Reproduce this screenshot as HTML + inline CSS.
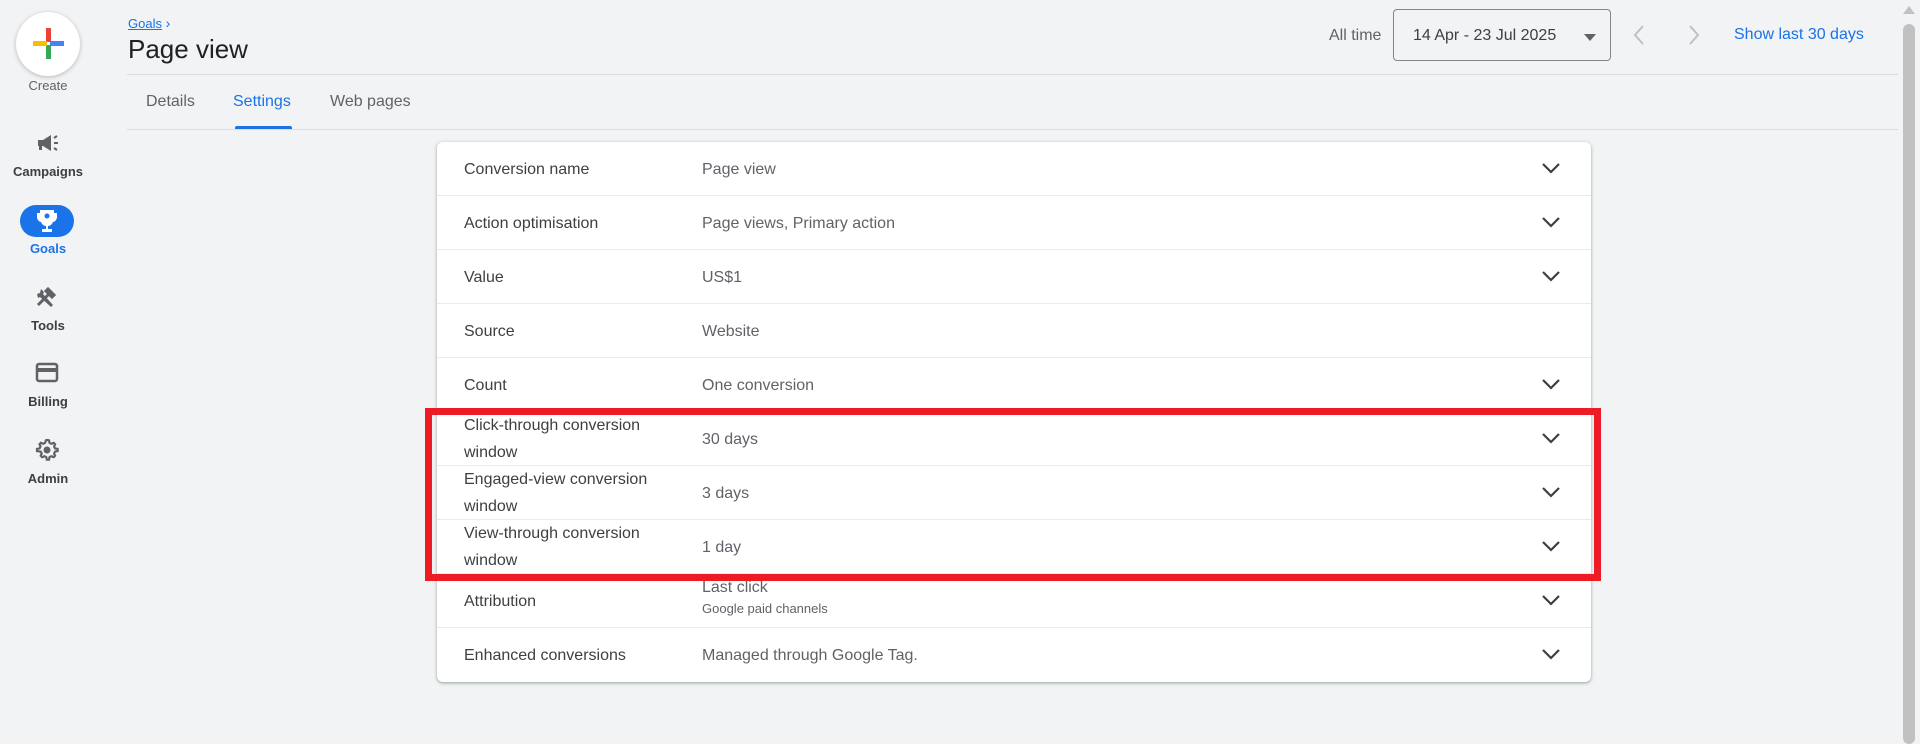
<!DOCTYPE html>
<html><head><meta charset="utf-8"><style>
*{margin:0;padding:0;box-sizing:border-box}
body{width:1920px;height:730px;background:#f1f3f4;font-family:"Liberation Sans",Arial,sans-serif;position:relative;overflow:hidden;color:#3c4043}
.abs{position:absolute}
.nav{position:absolute;left:0;width:96px;text-align:center;font-size:13px;color:#3c4043;font-weight:bold}
.card{position:absolute;left:437px;top:142px;width:1154px;background:#fff;border-radius:6px;box-shadow:0 1px 2px rgba(60,64,67,.3),0 1px 3px 1px rgba(60,64,67,.15)}
.row{height:54px;border-bottom:1px solid #e8eaed;position:relative;font-size:16px}
.row:last-child{border-bottom:none}
.lab{position:absolute;left:27px;top:0;height:54px;display:flex;align-items:center;width:230px;line-height:27px;color:#3c4043}
.val{position:absolute;left:265px;top:1px;height:54px;display:flex;flex-direction:column;justify-content:center;color:#5f6368}
.chev{position:absolute;right:30px;top:19px}
</style></head><body>
<div class="abs" style="left:16px;top:12px;width:64px;height:64px;border-radius:50%;background:#fff;box-shadow:0 1px 4px rgba(0,0,0,.25)">
<svg width="64" height="64" viewBox="0 0 64 64"><rect x="30" y="16" width="5" height="14" fill="#ea4335"/><rect x="34" y="29" width="14" height="5" fill="#4285f4"/><rect x="30" y="33" width="5" height="14" fill="#34a853"/><rect x="17" y="29" width="14" height="5" fill="#fbbc04"/></svg></div>
<div class="nav" style="top:78px;font-weight:normal;color:#5f6368">Create</div>
<svg class="abs" style="left:36px;top:134px" width="24" height="20" viewBox="0 0 24 20"><path d="M2 6h5l8-5v16l-8-5H6v4H3v-4H2z" fill="#5f6368"/><path d="M18 4l3-2M18 9h4M18 14l3 2" stroke="#5f6368" stroke-width="2"/></svg>
<div class="nav" style="top:164px">Campaigns</div>
<div class="abs" style="left:20px;top:205px;width:54px;height:32px;border-radius:16px;background:#1a73e8"></div>
<svg class="abs" style="left:36px;top:208px" width="22" height="26" viewBox="0 0 22 26"><path d="M4 2h14v3h3v4a5 5 0 0 1-4 5 6 6 0 0 1-5 4v3h4v3H6v-3h4v-3a6 6 0 0 1-5-4 5 5 0 0 1-4-5V5h3z" fill="#fff"/><circle cx="11" cy="8" r="2.5" fill="#1a73e8"/></svg>
<div class="nav" style="top:241px;color:#1a73e8">Goals</div>
<svg class="abs" style="left:35px;top:286px" width="24" height="24" viewBox="0 0 24 24"><path d="M3 19l9-9M12 10l2-2-3-3 2-2 6 6-2 2-3-3-2 2" stroke="#5f6368" stroke-width="3" fill="none"/><path d="M6 3l3 3-1 2 10 11-2 2L5 11l-2 1-1-4 3-1z" fill="#5f6368"/></svg>
<div class="nav" style="top:318px">Tools</div>
<svg class="abs" style="left:35px;top:362px" width="24" height="22" viewBox="0 0 24 22"><rect x="2" y="2" width="20" height="17" rx="2" fill="none" stroke="#5f6368" stroke-width="2.5"/><rect x="2" y="6" width="20" height="4" fill="#5f6368"/></svg>
<div class="nav" style="top:394px">Billing</div>
<svg class="abs" style="left:35px;top:438px" width="24" height="24" viewBox="0 0 24 24"><path d="M12 2l2 .3.5 2.5 1.8 1 2.4-1 1.4 1.4-1 2.4 1 1.8 2.5.5v2.2l-2.5.5-1 1.8 1 2.4-1.4 1.4-2.4-1-1.8 1-.5 2.5h-2.2l-.5-2.5-1.8-1-2.4 1-1.4-1.4 1-2.4-1-1.8L2 13.1v-2.2l2.5-.5 1-1.8-1-2.4 1.4-1.4 2.4 1 1.8-1L10.9 2.3z" fill="none" stroke="#5f6368" stroke-width="2.2"/><circle cx="12" cy="12" r="3.5" fill="#5f6368"/></svg>
<div class="nav" style="top:471px">Admin</div>
<div class="abs" style="left:128px;top:15px;font-size:13px;color:#1a73e8"><span style="text-decoration:underline">Goals</span> <span style="font-size:14px">›</span></div>
<div class="abs" style="left:128px;top:34px;font-size:26px;color:#202124">Page view</div>
<div class="abs" style="left:1329px;top:27px;font-size:16px;color:#5f6368">All time</div>
<div class="abs" style="left:1393px;top:9px;width:218px;height:52px;border:1px solid #80868b;border-radius:4px;font-size:16px;color:#3c4043;padding:17px 0 0 19px">14 Apr - 23 Jul 2025<svg class="abs" style="left:190px;top:24px" width="12" height="7"><path d="M0 0h12L6 7z" fill="#5f6368"/></svg></div>
<svg class="abs" style="left:1632px;top:24px" width="14" height="22"><path d="M11 2L3 11l8 9" stroke="#bdc1c6" stroke-width="2" fill="none"/></svg>
<svg class="abs" style="left:1687px;top:24px" width="14" height="22"><path d="M3 2l8 9-8 9" stroke="#bdc1c6" stroke-width="2" fill="none"/></svg>
<div class="abs" style="left:1734px;top:26px;font-size:16px;color:#1a73e8">Show last 30 days</div>
<div class="abs" style="left:127px;top:74px;width:1771px;height:1px;background:#dadce0"></div>
<div class="abs" style="left:146px;top:93px;font-size:16px;color:#5f6368">Details</div>
<div class="abs" style="left:233px;top:93px;font-size:16px;color:#1a73e8">Settings</div>
<div class="abs" style="left:235px;top:126px;width:57px;height:3px;background:#1a73e8;border-radius:2px 2px 0 0"></div>
<div class="abs" style="left:330px;top:93px;font-size:16px;color:#5f6368">Web pages</div>
<div class="abs" style="left:127px;top:129px;width:1771px;height:1px;background:#dadce0"></div>
<svg class="abs" style="left:1903px;top:6px" width="12" height="8"><path d="M0 8L6 0l6 8z" fill="#c1c1c1"/></svg>
<div class="abs" style="left:1903px;top:24px;width:12px;height:720px;background:#c1c1c1;border-radius:6px"></div>
<div class="card">
<div class="row"><div class="lab">Conversion name</div><div class="val">Page view</div><svg class="chev" width="20" height="14"><path d="M2 3l8 8 8-8" stroke="#3c4043" stroke-width="2.2" fill="none"/></svg></div>
<div class="row"><div class="lab">Action optimisation</div><div class="val">Page views, Primary action</div><svg class="chev" width="20" height="14"><path d="M2 3l8 8 8-8" stroke="#3c4043" stroke-width="2.2" fill="none"/></svg></div>
<div class="row"><div class="lab">Value</div><div class="val">US$1</div><svg class="chev" width="20" height="14"><path d="M2 3l8 8 8-8" stroke="#3c4043" stroke-width="2.2" fill="none"/></svg></div>
<div class="row"><div class="lab">Source</div><div class="val">Website</div></div>
<div class="row"><div class="lab">Count</div><div class="val">One conversion</div><svg class="chev" width="20" height="14"><path d="M2 3l8 8 8-8" stroke="#3c4043" stroke-width="2.2" fill="none"/></svg></div>
<div class="row"><div class="lab">Click-through conversion window</div><div class="val">30 days</div><svg class="chev" width="20" height="14"><path d="M2 3l8 8 8-8" stroke="#3c4043" stroke-width="2.2" fill="none"/></svg></div>
<div class="row"><div class="lab">Engaged-view conversion window</div><div class="val">3 days</div><svg class="chev" width="20" height="14"><path d="M2 3l8 8 8-8" stroke="#3c4043" stroke-width="2.2" fill="none"/></svg></div>
<div class="row"><div class="lab">View-through conversion window</div><div class="val">1 day</div><svg class="chev" width="20" height="14"><path d="M2 3l8 8 8-8" stroke="#3c4043" stroke-width="2.2" fill="none"/></svg></div>
<div class="row"><div class="lab">Attribution</div><div class="val"><span style="margin-top:-10px">Last click</span><span style="font-size:13px;margin-top:4px">Google paid channels</span></div><svg class="chev" width="20" height="14"><path d="M2 3l8 8 8-8" stroke="#3c4043" stroke-width="2.2" fill="none"/></svg></div>
<div class="row"><div class="lab">Enhanced conversions</div><div class="val">Managed through Google Tag.</div><svg class="chev" width="20" height="14"><path d="M2 3l8 8 8-8" stroke="#3c4043" stroke-width="2.2" fill="none"/></svg></div>
</div>
<div class="abs" style="left:425px;top:408px;width:1176px;height:173px;border:7px solid #ed1c24"></div>
</body></html>
